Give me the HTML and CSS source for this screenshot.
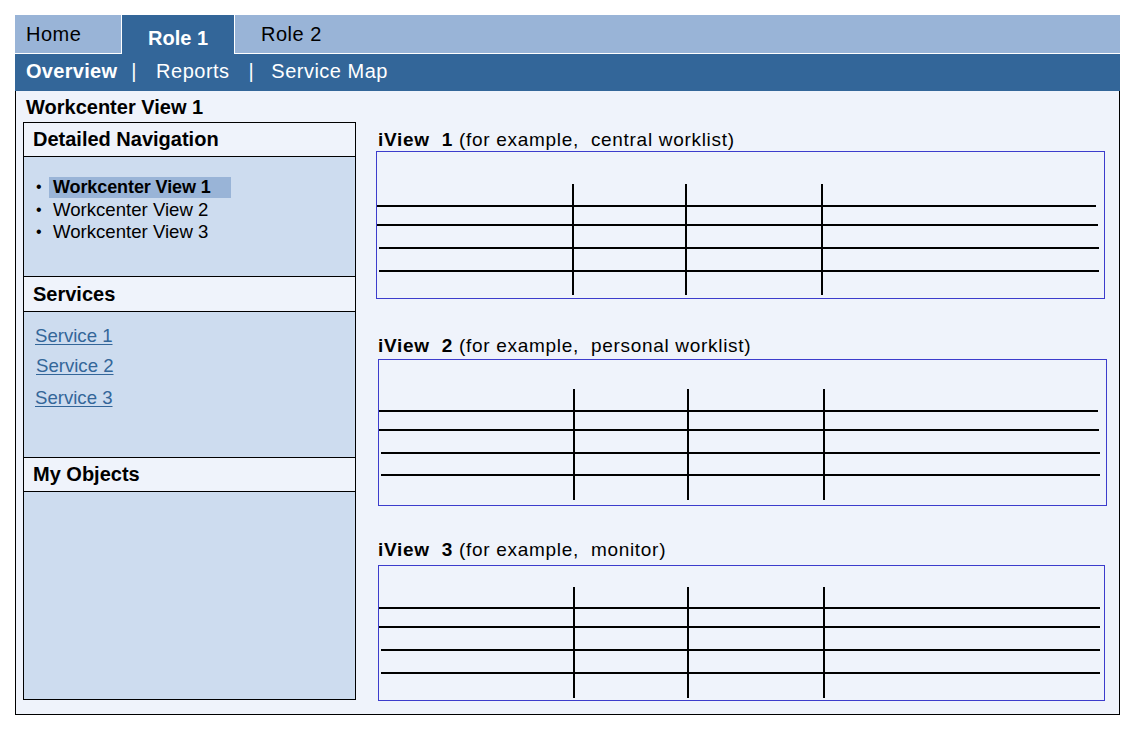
FILE: index.html
```html
<!DOCTYPE html>
<html>
<head>
<meta charset="utf-8">
<link rel="stylesheet" href="styles.css">
</head>
<body>
<div class="frame">
  <div class="tabs">
    <div class="tab tab-home">Home</div>
    <div class="tab tab-active">Role 1</div>
    <div class="tab tab-rest">Role 2</div>
  </div>
  <div class="subnav">
    <span class="sub sub-current">Overview</span>
    <span class="sep sep1">|</span>
    <span class="sub">Reports</span>
    <span class="sep sep2">|</span>
    <span class="sub">Service Map</span>
  </div>
  <div class="content">
    <div class="page-title">Workcenter View 1</div>
    <div class="main">
      <div class="panel">
        <div class="panel-head">Detailed Navigation</div>
        <div class="panel-body body-nav">
          <ul class="navlist">
            <li class="nav-item nav-sel"><span class="bullet">•</span><span class="sel-text">Workcenter View 1</span></li>
            <li class="nav-item"><span class="bullet">•</span><span>Workcenter View 2</span></li>
            <li class="nav-item"><span class="bullet">•</span><span>Workcenter View 3</span></li>
          </ul>
        </div>
        <div class="panel-head head-services">Services</div>
        <div class="panel-body body-services">
          <a class="svc svc1" href="#">Service 1</a>
          <a class="svc svc2" href="#">Service 2</a>
          <a class="svc svc3" href="#">Service 3</a>
        </div>
        <div class="panel-head">My Objects</div>
        <div class="panel-body body-objects"></div>
      </div>
      <div class="views">
        <div class="iv-title t1"><b>iView&nbsp; 1</b> (for example,&nbsp; central worklist)</div>
        <div class="iv-box box1">
          <svg class="grid" width="727" height="146" viewBox="0 0 727 146">
            <g stroke="#000" stroke-width="2">
              <line x1="0" y1="54" x2="719" y2="54"/>
              <line x1="0" y1="73" x2="721" y2="73"/>
              <line x1="2" y1="96" x2="722" y2="96"/>
              <line x1="2" y1="119" x2="722" y2="119"/>
              <line x1="196" y1="32" x2="196" y2="143"/>
              <line x1="309" y1="32" x2="309" y2="143"/>
              <line x1="445" y1="32" x2="445" y2="143"/>
            </g>
          </svg>
        </div>
        <div class="iv-title t2"><b>iView&nbsp; 2</b> (for example,&nbsp; personal worklist)</div>
        <div class="iv-box box2">
          <svg class="grid" width="727" height="145" viewBox="0 0 727 145">
            <g stroke="#000" stroke-width="2">
              <line x1="0" y1="51" x2="719" y2="51"/>
              <line x1="0" y1="70" x2="720" y2="70"/>
              <line x1="2" y1="93" x2="721" y2="93"/>
              <line x1="2" y1="115" x2="721" y2="115"/>
              <line x1="195" y1="29" x2="195" y2="140"/>
              <line x1="309" y1="29" x2="309" y2="140"/>
              <line x1="445" y1="29" x2="445" y2="140"/>
            </g>
          </svg>
        </div>
        <div class="iv-title t3"><b>iView&nbsp; 3</b> (for example,&nbsp; monitor)</div>
        <div class="iv-box box3">
          <svg class="grid" width="725" height="134" viewBox="0 0 725 134">
            <g stroke="#000" stroke-width="2">
              <line x1="0" y1="42" x2="721" y2="42"/>
              <line x1="0" y1="61" x2="721" y2="61"/>
              <line x1="2" y1="84" x2="721" y2="84"/>
              <line x1="2" y1="107" x2="721" y2="107"/>
              <line x1="195" y1="21" x2="195" y2="132"/>
              <line x1="309" y1="21" x2="309" y2="132"/>
              <line x1="445" y1="21" x2="445" y2="132"/>
            </g>
          </svg>
        </div>
      </div>
    </div>
  </div>
</div>
</body>
</html>
```

FILE: styles.css
```css
html, body {
  margin: 0;
  padding: 0;
  background: #ffffff;
}
body {
  font-family: "Liberation Sans", Arial, sans-serif;
  color: #000;
}
.frame {
  margin: 15px 0 0 15px;
  width: 1105px;
}
.tabs {
  display: flex;
  height: 39px;
  background: #99b4d7;
}
.tab {
  box-sizing: border-box;
  height: 39px;
  font-size: 20px;
  line-height: 1;
  letter-spacing: 0.5px;
}
.tab-home {
  width: 106px;
  padding: 9px 0 0 11px;
  border-bottom: 1px solid #fff;
}
.tab-active {
  width: 114px;
  background: #336699;
  color: #fff;
  font-weight: bold;
  letter-spacing: 0;
  border-left: 1px solid #fff;
  border-right: 1px solid #fff;
  padding: 13px 0 0 26px;
}
.tab-rest {
  flex: 1;
  padding: 9px 0 0 26px;
  border-bottom: 1px solid #fff;
}
.subnav {
  box-sizing: border-box;
  height: 37px;
  background: #336699;
  color: #fff;
  font-size: 20px;
  line-height: 1;
  padding: 7px 0 0 11px;
  display: flex;
  white-space: pre;
  letter-spacing: 0.5px;
}
.sub-current {
  font-weight: bold;
  letter-spacing: 0.3px;
}
.sep1 {
  padding: 0 19px 0 14px;
}
.sep2 {
  padding: 0 17px 0 19px;
}
.content {
  box-sizing: border-box;
  height: 624px;
  background: #eff3fb;
  border: 1px solid #000;
  border-top: none;
  padding: 5px 0 0 7px;
}
.page-title {
  font-size: 20px;
  font-weight: bold;
  line-height: 22px;
  padding-left: 3px;
}
.main {
  display: flex;
  margin-top: 4px;
}
.panel {
  box-sizing: border-box;
  width: 333px;
  height: 578px;
  border: 1px solid #000;
  display: flex;
  flex-direction: column;
}
.panel-head {
  height: 33px;
  line-height: 33px;
  font-size: 20px;
  font-weight: bold;
  padding-left: 9px;
  background: #eff3fb;
  border-bottom: 1px solid #000;
}
.head-services {
  height: 34px;
  line-height: 35px;
}
.panel-body {
  background: #cddcef;
  box-sizing: border-box;
}
.body-nav {
  height: 120px;
  border-bottom: 1px solid #000;
  padding-top: 19px;
}
.body-services {
  height: 146px;
  border-bottom: 1px solid #000;
  padding-top: 13px;
  display: flex;
  flex-direction: column;
  align-items: flex-start;
}
.body-objects {
  flex: 1;
}
.navlist {
  list-style: none;
  margin: 0;
  padding: 0 0 0 12px;
  font-size: 18.6px;
  line-height: 22.5px;
}
.nav-item {
  display: flex;
  align-items: center;
  height: 22.5px;
}
.bullet {
  width: 17px;
  font-size: 16px;
}
.nav-sel .sel-text {
  font-weight: bold;
  font-size: 18px;
  background: #99b4d7;
  width: 178px;
  margin-left: -4px;
  padding-left: 4px;
  line-height: 21px;
  letter-spacing: -0.1px;
}
.svc {
  display: block;
  font-size: 18.6px;
  line-height: 22px;
  color: #336699;
  text-decoration: underline;
  text-underline-offset: 2px;
}
.svc1 {
  margin-left: 11px;
}
.svc2 {
  margin-left: 12px;
  margin-top: 8px;
}
.svc3 {
  margin-left: 11px;
  margin-top: 10px;
}
.views {
  margin-left: 20px;
  display: flex;
  flex-direction: column;
}
.iv-title {
  font-size: 19px;
  line-height: 22px;
  padding-left: 2px;
  white-space: nowrap;
  letter-spacing: 0.7px;
}
.t1 {
  margin-top: 7px;
}
.t2 {
  margin-top: 36px;
}
.t3 {
  margin-top: 33px;
}
.iv-box {
  border: 1px solid #3c3ccc;
  box-sizing: border-box;
  display: flex;
}
.grid {
  display: block;
}
.box1 {
  width: 729px;
  height: 148px;
}
.box2 {
  width: 729px;
  height: 147px;
  margin-left: 2px;
  margin-top: 2px;
}
.box3 {
  width: 727px;
  height: 136px;
  margin-left: 2px;
  margin-top: 4px;
}
```
